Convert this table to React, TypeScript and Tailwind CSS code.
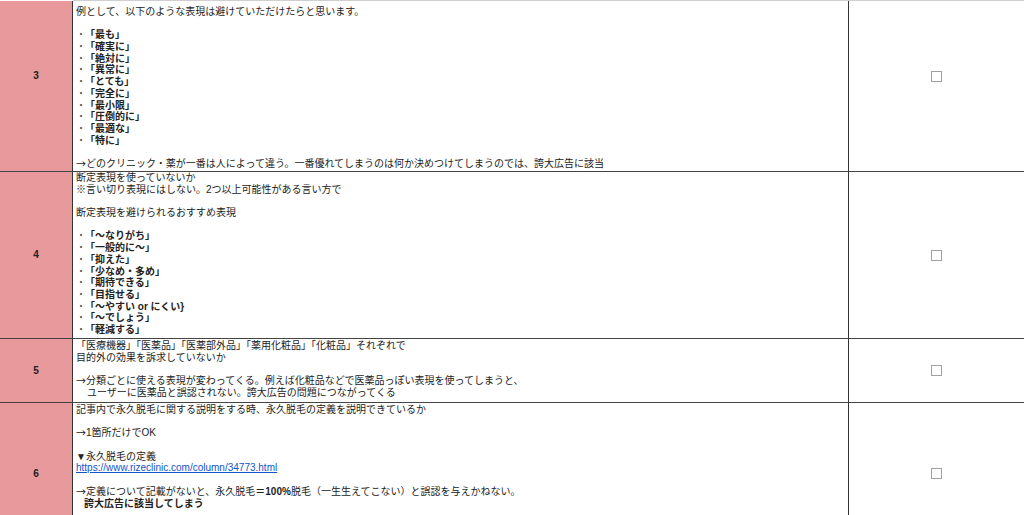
import React from "react";

const font = { fontFamily: '"Liberation Sans", "Noto Sans CJK JP", sans-serif' };
const cjk = { fontFamily: '"Noto Sans CJK JP", sans-serif' };

function Check() {
  return <div className="w-[11px] h-[11px] border-[1.5px] border-[#a0a0a0] bg-white" />;
}

function L({ children, className = "" }: { children?: React.ReactNode; className?: string }) {
  return <div className={"flex items-center h-[11.7px] leading-[11.7px] whitespace-nowrap " + className}>{children}</div>;
}

function Item({ t }: { t: string }) {
  return (
    <L>
      <span className="w-[9px] overflow-hidden text-[#555]">・</span>
      <span className="font-bold">{t}</span>
    </L>
  );
}

const Arrow = () => <span style={cjk}>→</span>;
const Blank = () => <div className="h-[11.7px]" />;

export default function App() {
  return (
    <div className="w-[1024px] h-[515px] overflow-hidden bg-white text-[10px] leading-[11.7px] text-[#222]" style={font}>
      <div className="h-px bg-[#cfcfcf] ml-[73px]" />
      {/* Row 3 */}
      <div className="flex h-[170px]">
        <div className="w-[72px] bg-[#e8999b] flex items-center justify-center pb-[20px] font-bold border-r border-[#333] box-content">3</div>
        <div className="w-[772px] pl-[3px] pt-[5px] border-r border-[#333] box-content">
          <L>例として、以下のような表現は避けていただけたらと思います。</L>
          <Blank />
          <Item t="「最も」" />
          <Item t="「確実に」" />
          <Item t="「絶対に」" />
          <Item t="「異常に」" />
          <Item t="「とても」" />
          <Item t="「完全に」" />
          <Item t="「最小限」" />
          <Item t="「圧倒的に」" />
          <Item t="「最適な」" />
          <Item t="「特に」" />
          <Blank />
          <L><Arrow /><span>どのクリニック・薬が一番は人によって違う。一番優れてしまうのは何か決めつけてしまうのでは、誇大広告に該当</span></L>
        </div>
        <div className="flex-1 flex items-center justify-center pb-[20px]"><Check /></div>
      </div>
      {/* Row 4 */}
      <div className="flex h-[167px] border-t border-[#444]">
        <div className="w-[72px] bg-[#e8999b] flex items-center justify-center font-bold border-r border-[#333] box-content">4</div>
        <div className="w-[772px] pl-[3px] pt-[0px] border-r border-[#333] box-content">
          <L>断定表現を使っていないか</L>
          <L>※言い切り表現にはしない。2つ以上可能性がある言い方で</L>
          <Blank />
          <L>断定表現を避けられるおすすめ表現</L>
          <Blank />
          <Item t="「～なりがち」" />
          <Item t="「一般的に～」" />
          <Item t="「抑えた」" />
          <Item t="「少なめ・多め」" />
          <Item t="「期待できる」" />
          <Item t="「目指せる」" />
          <Item t="「～やすい or にくい}" />
          <Item t="「～でしょう」" />
          <Item t="「軽減する」" />
        </div>
        <div className="flex-1 flex items-center justify-center"><Check /></div>
      </div>
      {/* Row 5 */}
      <div className="flex h-[64px] border-t border-[#444]">
        <div className="w-[72px] bg-[#e8999b] flex items-center justify-center font-bold border-r border-[#333] box-content">5</div>
        <div className="w-[772px] pl-[3px] pt-[1px] border-r border-[#333] box-content">
          <L>「医療機器」「医薬品」「医薬部外品」「薬用化粧品」「化粧品」それぞれで</L>
          <L>目的外の効果を訴求していないか</L>
          <Blank />
          <L><Arrow /><span>分類ごとに使える表現が変わってくる。例えば化粧品などで医薬品っぽい表現を使ってしまうと、</span></L>
          <L className="pl-[11px]">ユーザーに医薬品と誤認されない。誇大広告の問題につながってくる</L>
        </div>
        <div className="flex-1 flex items-center justify-center"><Check /></div>
      </div>
      {/* Row 6 */}
      <div className="flex h-[142px] border-t border-[#444]">
        <div className="w-[72px] bg-[#e8999b] flex items-center justify-center font-bold border-r border-[#333] box-content">6</div>
        <div className="w-[772px] pl-[3px] pt-[1px] border-r border-[#333] box-content">
          <L>記事内で永久脱毛に関する説明をする時、永久脱毛の定義を説明できているか</L>
          <Blank />
          <L><Arrow /><span>1箇所だけでOK</span></L>
          <Blank />
          <L>▼永久脱毛の定義</L>
          <L><span className="text-[#1155cc] underline">https://www.rizeclinic.com/column/34773.html</span></L>
          <Blank />
          <L><Arrow /><span>定義について記載がないと、永久脱毛</span><span className="font-bold">＝100%</span><span>脱毛（一生生えてこない）と誤認を与えかねない。</span></L>
          <L className="pl-[8px] font-bold">誇大広告に該当してしまう</L>
        </div>
        <div className="flex-1 flex items-center justify-center"><Check /></div>
      </div>
    </div>
  );
}
